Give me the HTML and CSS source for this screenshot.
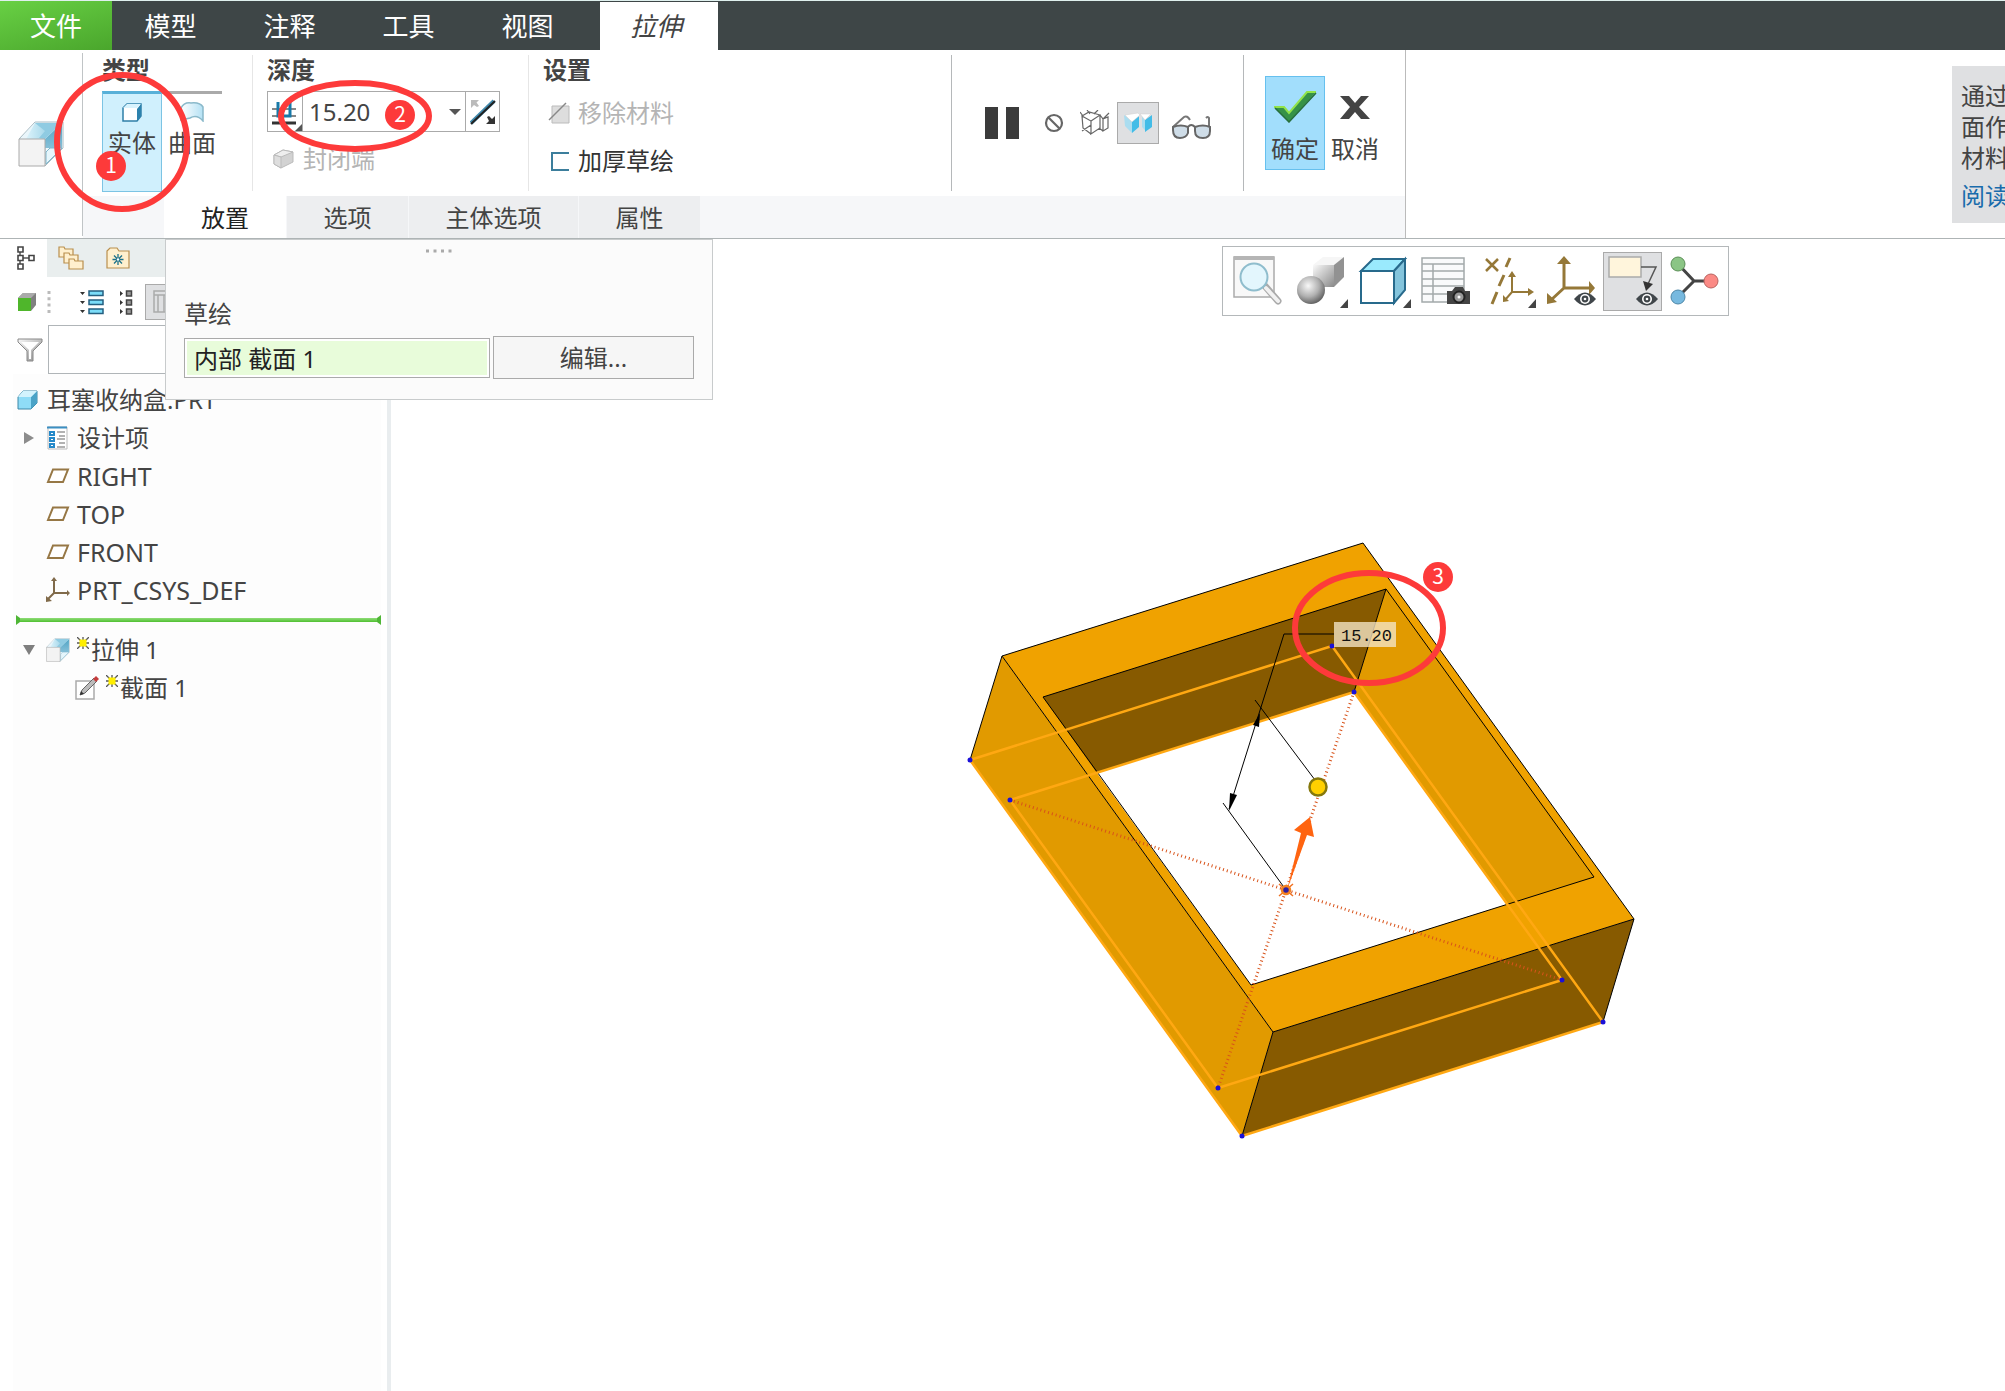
FILE: index.html
```html
<!DOCTYPE html>
<html lang="zh-CN">
<head>
<meta charset="utf-8">
<title>拉伸</title>
<link rel="stylesheet" href="styles.css">
</head>
<body>
<svg class="defs" aria-hidden="true">
  <defs>
    <linearGradient id="gBlue" x1="0" y1="0" x2="1" y2="0"><stop offset="0" stop-color="#dcf3fb"/><stop offset="1" stop-color="#8ecbe2"/></linearGradient>
    <linearGradient id="gSide" x1="0" y1="0" x2="0" y2="1"><stop offset="0" stop-color="#4fa3c4"/><stop offset="1" stop-color="#86c0d8"/></linearGradient>
    <linearGradient id="gLight" x1="0" y1="0" x2="1" y2="0"><stop offset="0" stop-color="#fff"/><stop offset="1" stop-color="#b4e1f4"/></linearGradient>
    <linearGradient id="gGrey" x1="0" y1="0" x2="1" y2="1"><stop offset="0" stop-color="#fafafa"/><stop offset="1" stop-color="#8a8a8a"/></linearGradient>
    <radialGradient id="gBall" cx=".4" cy=".35" r=".65"><stop offset="0" stop-color="#f8f8f8"/><stop offset=".6" stop-color="#b0b0b0"/><stop offset="1" stop-color="#666"/></radialGradient>
    <symbol id="extrude" viewBox="0 0 46 46">
      <path d="M1 18 17 1h28v26L27 45V18z" fill="#eef9fd" stroke="#a9bcc4"/>
      <path d="M2 18 17 2v16z" fill="#eaf6fb"/>
      <path d="M17 2h20L27 18H8z" fill="url(#gBlue)"/>
      <path d="M27 18 44 2v25H27z" fill="url(#gSide)"/><path d="M17 2h27L27 18l-6-1 6-7z" fill="#8fcbe2"/>
      <path d="M28 43V31l4-4h12z" fill="#e6f6fc" stroke="#7fb6cc"/>
      <path d="M1 18h26v27H1z" fill="#f3f3f3" stroke="#aaa"/>
    </symbol>
    <symbol id="eye" viewBox="0 0 22 14"><path d="M0 7Q11-6 22 7 11 20 0 7z" fill="#40464a"/><circle cx="11" cy="7" r="5" fill="#fff"/><circle cx="11" cy="7" r="3.4" fill="#40464a"/><circle cx="11" cy="7" r="1.3" fill="#fff"/></symbol>
    <symbol id="plane" viewBox="0 0 24 16"><path d="M7 1.500h15l-5 12.500H2z" fill="#fff" stroke="#967745" stroke-width="2"/></symbol>
    <symbol id="spark" viewBox="0 0 12 12"><path d="M0 0l12 12M12 0 0 12M6 0v12M0 6h12" stroke="#555" stroke-width="1.300"/><path d="M2.500 2.500h7v7h-7z" fill="#ffee00"/></symbol>
  </defs>
</svg>

<header>
  <nav class="menu">
    <button class="menu-tab file">文件</button>
    <button class="menu-tab">模型</button>
    <button class="menu-tab">注释</button>
    <button class="menu-tab">工具</button>
    <button class="menu-tab">视图</button>
    <button class="menu-tab current">拉伸</button>
  </nav>

  <div class="ribbon">
    <div class="feature"><svg width="46" height="46"><use href="#extrude"/></svg></div>
    <div class="dashboard">
      <div class="groups">
        <section class="group type">
          <h2>类型</h2>
          <div class="type-row">
            <button class="type-btn on"><svg width="22" height="20" viewBox="0 0 22 20"><path d="M2 6l4-4h14v12l-4 5H2z" fill="#fff" stroke="#2e7fa8" stroke-width="1.500"/><path d="M16 7l4-5v12l-4 5z" fill="#2c82ad"/><path d="M2 6l4-4h14l-4 4z" fill="#d9f3fd"/></svg>实体</button>
            <button class="type-btn"><svg width="24" height="20" viewBox="0 0 24 20"><path d="M1 6Q4 0 11 1q9-1 12 4v14q-6-7-13-3L1 18z" fill="url(#gLight)" stroke="#8ab9ca" stroke-width="1.500"/></svg>曲面</button>
          </div>
        </section>
        <section class="group depth">
          <h2>深度</h2>
          <div class="depth-box">
            <button class="cell" aria-label="深度选项"><svg width="34" height="39" viewBox="0 0 34 39"><path d="M4 17h24M4 24h24" stroke="#888" stroke-width="2"/><path d="M4 31h24" stroke="#333" stroke-width="3"/><path d="M10 10v14h12V10" fill="none" stroke="#1879a8" stroke-width="3"/><path d="M34 32v7h-7z" fill="#555"/></svg></button>
            <input class="depth-value" aria-label="深度" value="15.20">
            <button class="arrow" aria-label="展开"><svg width="12" height="8" viewBox="0 0 12 8"><path d="M0 1h12L6 7z" fill="#555"/></svg></button>
            <button class="cell flip" aria-label="反向"><svg width="26" height="26" viewBox="0 0 26 26"><path d="M1 24 24 2" stroke="#3f88ab" stroke-width="4"/><path d="M1 25 25 2" stroke="#222" stroke-width="2"/><path d="M1 1h8L6.500 3.500 9 7 7 8 4 6 1 9z" fill="#bbb"/><path d="M25 25h-9l3-3-2-4 2-1 3 3 3-3z" fill="#333"/></svg></button>
          </div>
          <button class="option off"><svg width="22" height="20" viewBox="0 0 22 20"><path d="M1 6l9-5 10 2v10L8 19l-7-4z" fill="#d2d2d2" stroke="#bbb"/><path d="M1 6l9-5 10 2L8 8z" fill="#eee" stroke="#bbb"/><path d="M1 6l7 2v11l-7-4z" fill="#dedede" stroke="#bbb"/></svg>封闭端</button>
        </section>
        <section class="group settings">
          <h2>设置</h2>
          <button class="option off"><svg width="22" height="22" viewBox="0 0 22 22"><path d="M4 4h17v17H4z" fill="#ddd" stroke="#bbb"/><path d="M1 18 18 1" stroke="#888" stroke-width="1.500"/></svg>移除材料</button>
          <button class="option"><svg width="22" height="22" viewBox="0 0 22 22"><path d="M21 3H4v17h17" fill="none" stroke="#3c7e9c" stroke-width="2"/></svg>加厚草绘</button>
        </section>
        <section class="group preview">
          <button aria-label="暂停"><svg width="36" height="34" viewBox="0 0 36 34"><path d="M1 1h13v32H1zM22 1h13v32H22z" fill="#3b3b3b"/></svg></button>
          <button class="stop" aria-label="无预览"><svg width="20" height="20" viewBox="0 0 20 20"><circle cx="10" cy="10" r="8" fill="none" stroke="#666" stroke-width="2.200"/><path d="M4.500 4.500l11 11" stroke="#666" stroke-width="2.200"/></svg></button>
          <button class="ghost" aria-label="分离预览"><svg width="30" height="26" viewBox="0 0 30 26"><path d="M2 6 11 11v13L3 18zM11 11l9-6v13l-9 6zM2 6l7-4 11 3M20 5l3 4v12l5-3V7l-5 2M23 9l6-6M0 2l3 4M7 0l3 4M14 4l4-4M11 15l-9 6M23 21l-4-3" fill="none" stroke="#666" stroke-width="1.200"/></svg></button>
          <button class="pressed" aria-label="连接预览"><svg width="28" height="22" viewBox="0 0 28 22"><path d="M0 3 8 9v12L1 14zM18 3l3 5v10l-3-3z" fill="#aaddf0"/><path d="M8 9l7-5v11l-7 6zM21 8l7-5v12l-7 5z" fill="#43bce7"/><path d="M1 3 14 1l2 2-8 7zM16 2h11l-6 6z" fill="#fff" stroke="#ccc" stroke-width=".5"/></svg></button>
          <button class="glasses" aria-label="校验"><svg width="42" height="26" viewBox="0 0 42 26"><path d="M2 13 13 3q3-2 6 3M38 13V4q-1-2-3 0" fill="none" stroke="#777" stroke-width="2"/><path d="M2 13q8-3 15 0v6q-2 5-8 5-7 0-7-8zM24 13q8-3 15 0v4q0 7-7 7-8 0-8-7z" fill="#cfdde8" stroke="#666" stroke-width="2"/><path d="M17 13q3-4 7 0" fill="none" stroke="#666" stroke-width="2"/></svg></button>
        </section>
        <section class="group finish">
          <button class="big ok"><svg width="44" height="32" viewBox="0 0 44 32"><path d="M1 16h10l5 6L34 1h9L16 31z" fill="#369247"/><path d="M1 16h10l5 6L34 1h9" fill="none" stroke="#92e34a" stroke-width="2"/><path d="M2 17 16 31 43 2" fill="none" stroke="#276f3c" stroke-width="1.500"/></svg>确定</button>
          <button class="big"><svg width="30" height="32" viewBox="0 0 30 32"><path d="M0 5h9l6 7 6-7h8L19 16l11 12h-9l-6-7-6 7H0l10-12z" fill="#444"/></svg>取消</button>
        </section>
      </div>
      <div class="panels">
        <button class="panel-tab active">放置</button>
        <button class="panel-tab">选项</button>
        <button class="panel-tab wide">主体选项</button>
        <button class="panel-tab">属性</button>
      </div>
    </div>
    <aside class="help"><p>通过<br>面作<br>材料</p><a href="#">阅读</a></aside>
  </div>
</header>

<main>
  <aside class="sidebar">
    <div class="nav-tabs">
      <button class="nav-tab sel" aria-label="模型树"><svg width="18" height="26" viewBox="0 0 18 26"><path d="M3 3v20M3 13h12" stroke="#555" stroke-width="1.500"/><path d="M1 2h5v5H1zM1 10.500h5v5H1zM1 19h5v5H1zM12 10.500h5v5h-5z" fill="#fff" stroke="#444" stroke-width="1.600"/></svg></button>
      <button class="nav-tab" aria-label="文件夹"><svg width="26" height="26" viewBox="0 0 26 26"><g fill="#fff0ce" stroke="#b98f4e" stroke-width="1.200"><path d="M1 2h5l1 2h8v8H1z"/><path d="M6 8h5l1 2h8v8H6z"/><path d="M11 14h5l1 2h8v8H11z"/></g></svg></button>
      <button class="nav-tab" aria-label="收藏夹"><svg width="24" height="24" viewBox="0 0 24 24"><path d="M1 5 4 2h7l2 3h10v17H1z" fill="#fff0ce" stroke="#b98f4e" stroke-width="1.200"/><path d="M12 8v11M6.500 13.500h11M8 9.500l8 8M16 9.500l-8 8" stroke="#1c7189" stroke-width="1.300"/><circle cx="12" cy="13.500" r="1.200" fill="#fff"/></svg></button>
    </div>
    <div class="tools">
      <svg width="20" height="20" viewBox="0 0 20 20"><path d="M1 6 6 1h13v12l-5 6V6z" fill="#808080"/><path d="M1 6 6 1h13l-5 5z" fill="#aaa"/><path d="M1 6h13v13H1z" fill="#4fb62b"/></svg>
      <svg class="grip" width="4" height="24" viewBox="0 0 4 24"><path d="M2 1v22" stroke="#bbb" stroke-width="3" stroke-dasharray="3 3.300"/></svg>
      <svg class="expand" width="24" height="26" viewBox="0 0 24 26"><g fill="#7bdcf8" stroke="#245f80" stroke-width="1.500"><path d="M9 2h14v4.500H9zM9 11h14v4.500H9zM9 20h14v4.500H9z"/></g><path d="M0 3h5L2.500 6zM0 12h5l-2.500 3zM0 21h5l-2.500 3z" fill="#333"/></svg>
      <svg class="collapse" width="14" height="26" viewBox="0 0 14 26"><g fill="#999" stroke="#444" stroke-width="1.500"><path d="M7.500 2h5v5h-5zM7.500 11h5v5h-5zM7.500 20h5v5h-5z"/></g><path d="M1 2v5l3-2.500zM1 11v5l3-2.500zM1 20v5l3-2.500z" fill="#333"/></svg>
      <button class="columns" aria-label="列"><svg width="24" height="24" viewBox="0 0 24 24"><path d="M1 1h22v21H1zM1 5h22M5 5v17M11 5v17" fill="none" stroke="#aaa" stroke-width="1.500"/></svg></button>
    </div>
    <div class="search">
      <svg width="26" height="24" viewBox="0 0 26 24"><path d="M1 1h24v3l-9 9v10h-6V13L1 4z" fill="url(#gGrey)" stroke="#888"/><path d="M4 4h18l-8 8v9h-2v-9z" fill="#fff"/></svg>
      <input aria-label="搜索">
    </div>
    <ul class="tree">
      <li><svg width="22" height="20" viewBox="0 0 22 20"><path d="M1 7 6 1h14v12l-6 6H1z" fill="#8fdcf7" stroke="#3d88a8"/><path d="M14 7l6-6v12l-6 6z" fill="#4ba3c7"/><path d="M1 7 6 1h14l-6 6z" fill="#d3f3fd"/></svg><span class="root-label">耳塞收纳盒.PRT</span></li>
      <li class="child"><svg class="tog" width="12" height="14" viewBox="0 0 12 14"><path d="M1 1v12l10-6z" fill="#8c8c8c"/></svg><svg width="24" height="24" viewBox="0 0 24 24"><path d="M2 1h19v22H2z" fill="#fff" stroke="#bbb"/><path d="M1 1.500h20" stroke="#3b8fc2" stroke-width="2"/><path d="M11 6h8M13 10h6M11 13h8M13 17h6M11 21h8" stroke="#999" stroke-width="1.500"/><path d="M4 6h4v3H4zM4 12h4v3H4zM4 18h4v3H4z" fill="#fff" stroke="#2589c9" stroke-width="2"/></svg><span>设计项</span></li>
      <li class="child latin"><i class="tog"></i><svg width="24" height="16"><use href="#plane"/></svg><span>RIGHT</span></li>
      <li class="child latin"><i class="tog"></i><svg width="24" height="16"><use href="#plane"/></svg><span>TOP</span></li>
      <li class="child latin"><i class="tog"></i><svg width="24" height="16"><use href="#plane"/></svg><span>FRONT</span></li>
      <li class="child latin"><i class="tog"></i><svg width="24" height="26" viewBox="0 0 24 26"><path d="M8 2v14h14M8 16l-6 6" fill="none" stroke="#806a4a" stroke-width="2"/><path d="M5 4l3-4 3 4zM21 13l3 3-3 3zM0 25v-6l6 5z" fill="#806a4a"/></svg><span>PRT_CSYS_DEF</span></li>
      <li class="insert"><svg width="4" height="10" viewBox="0 0 4 10"><path d="M0 0l4 3v4l-4 3z" fill="#4fb636"/></svg><i></i><svg width="4" height="10" viewBox="0 0 4 10"><path d="M4 0 0 3v4l4 3z" fill="#4fb636"/></svg></li>
      <li class="child"><svg class="tog" width="14" height="12" viewBox="0 0 14 12"><path d="M1 1h12L7 11z" fill="#7f7f7f"/></svg><svg width="24" height="24"><use href="#extrude"/></svg><svg class="spark" width="12" height="12"><use href="#spark"/></svg><span>拉伸 1</span></li>
      <li class="leaf"><svg width="24" height="24" viewBox="0 0 24 24"><path d="M1 5h18v18H1z" fill="#fff" stroke="#aaa" stroke-width="1.500"/><path d="M5 19l2-5L19 2l3 3L10 17z" fill="#bbb" stroke="#666"/><path d="M18 3l3-3 3 3-3 3z" fill="#c43c3c"/><path d="M5 19l1-4 3 3z" fill="#333"/></svg><svg class="spark" width="12" height="12"><use href="#spark"/></svg><span>截面 1</span></li>
    </ul>
  </aside>

  <section class="viewport">
    <div class="view-tools">
      <button aria-label="重新调整"><svg width="57" height="57" viewBox="0 0 57 57"><path d="M2 4h40v40H2z" fill="#f8f8f8" stroke="#aaa" stroke-width="1.500"/><path d="M2 5h40" stroke="#b5b5b5" stroke-width="4"/><path d="M33 33l13 15" stroke="#aaa" stroke-width="7" stroke-linecap="round"/><path d="M34 35l12 13" stroke="#f1f1f1" stroke-width="4" stroke-linecap="round"/><circle cx="22" cy="24" r="13.500" fill="#e3f6fd" stroke="#8fbdcd" stroke-width="2"/></svg></button>
      <button aria-label="着色"><svg width="57" height="57" viewBox="0 0 57 57"><path d="M19 12h21v22H19z" fill="url(#gGrey)"/><path d="M19 12 29 4h21l-9 8z" fill="#f6f6f6"/><path d="M40 12 50 4v20L40 34z" fill="#929292"/><circle cx="17" cy="37" r="14" fill="url(#gBall)"/><path d="M54 46v9h-8z" fill="#444"/></svg></button>
      <button aria-label="已保存方向"><svg width="57" height="57" viewBox="0 0 57 57"><g stroke="#286a8c" stroke-width="2"><path d="M5 18 17 6h32L38 18z" fill="#9aeafd"/><path d="M38 18 49 6v31L38 50z" fill="#84c4dc"/><path d="M5 18h33v32H5z" fill="#fff"/></g><path d="M55 46v9h-8z" fill="#444"/></svg></button>
      <button aria-label="视图管理器"><svg width="57" height="57" viewBox="0 0 57 57"><path d="M4 5h42v44H4zM4 11h42M4 18h42M4 26h42M4 33h42M4 41h42M15 11v38" fill="#f9fafb" stroke="#a3a9ab" stroke-width="1.500"/><path d="M29 38h5l3-4h8l2 4h5v13H29z" fill="#444"/><circle cx="41" cy="44" r="5.500" fill="#999" stroke="#222" stroke-width="2"/><circle cx="41" cy="44" r="1.500" fill="#fff"/></svg></button>
      <button aria-label="基准显示"><svg width="57" height="57" viewBox="0 0 57 57"><g fill="none" stroke="#957838" stroke-width="2.500"><path d="M6 6l12 12M18 6 6 18"/><path d="M30 5l-4 9M24 22l-5 11M17 39l-5 12" stroke-width="3"/><path d="M32 22v17h18M32 39l-7 8" stroke-width="2"/></g><path d="M28 24l4-6 4 6zM48 35l6 4-6 4zM23 49v-7l6 6z" fill="#957838"/><path d="M56 46v9h-8z" fill="#444"/></svg></button>
      <button aria-label="坐标系"><svg width="57" height="57" viewBox="0 0 57 57"><path d="M22 8v27h26M22 35 9 47" fill="none" stroke="#957838" stroke-width="3"/><path d="M15 11l7-8 7 8zM47 28l6 7-6 7zM5 51V40l10 9z" fill="#957838"/><use href="#eye" x="32" y="39" width="22" height="14"/></svg></button>
      <button class="pressed" aria-label="注释显示"><svg width="57" height="57" viewBox="0 0 57 57"><path d="M5 4h32v20H5z" fill="#fff5dc" stroke="#aaa" stroke-width="1.500"/><path d="M37 14h15l-8 17" fill="none" stroke="#555" stroke-width="1.500"/><path d="M39 28l10 3-7 7z" fill="#333"/><use href="#eye" x="32" y="39" width="22" height="14"/></svg></button>
      <button aria-label="旋转中心"><svg width="57" height="57" viewBox="0 0 57 57"><path d="M12 11l16 17L12 44M28 28h16" fill="none" stroke="#444" stroke-width="3"/><circle cx="12" cy="11" r="7" fill="#8bc585" stroke="#5b8e57"/><circle cx="12" cy="44" r="7" fill="#77b9df" stroke="#4d87a8"/><circle cx="45" cy="28" r="7" fill="#fb8a85" stroke="#b86460"/></svg></button>
    </div>
    <svg class="model" width="700" height="620" viewBox="950 530 700 620">
      <g stroke="none">
        <path d="M1002 656 1363 543l271 376-361 113z" fill="#f0a200"/>
        <path d="M1002 656l271 376-31 104L970 760z" fill="#e19a00"/>
        <path d="M1273 1032l361-113-31 103-361 114z" fill="#875a00"/>
        <path d="M1043 697l343-108-32 103-257 81z" fill="#875a00"/>
        <path d="M1386 589l208 288-86 27-154-212z" fill="#e19a00"/>
        <path d="M1097 773l257-81 154 212-257 81z" fill="#fff"/>
      </g>
      <g fill="none" stroke="#000" stroke-width="1">
        <path d="M1002 656 1363 543l271 376-361 113zM1002 656l-32 104M1273 1032l-31 104M1634 919l-31 103"/>
        <path d="M1043 697l343-108 208 288-343 108zM1386 589l-32 103"/>
      </g>
      <g fill="none" stroke="#ffa812" stroke-width="2.500">
        <path d="M970 760l362-114 271 376-361 114z"/><path d="M1010 800l344-108 208 288-344 108z"/>
      </g>
      <path d="M1010 800l552 180M1354 692l-136 396" fill="none" stroke="#d8531a" stroke-width="3" stroke-dasharray="1 3"/>
      <g fill="none" stroke="#000"><path d="M1334 634h-50l-55 175M1255 700l63 84M1223 803l63 87"/></g>
      <path d="M1260 713l-7 12 6 2zM1229 811l1-18 7 2z"/>
      <g fill="#1a10d8"><circle cx="970" cy="760" r="2.500"/><circle cx="1332" cy="646" r="2.500"/><circle cx="1603" cy="1022" r="2.500"/><circle cx="1242" cy="1136" r="2.500"/><circle cx="1010" cy="800" r="2.500"/><circle cx="1354" cy="692" r="2.500"/><circle cx="1562" cy="980" r="2.500"/><circle cx="1218" cy="1088" r="2.500"/></g>
      <circle cx="1318" cy="787" r="8.500" fill="#ffd000" stroke="#85780c" stroke-width="2.500"/>
      <path d="M1287 890l14-57-7-3 16-13 4 20-7-2z" fill="#ff6410"/>
      <path d="M1279 884l14 12M1293 884l-14 12" stroke="#f07020" stroke-width="1.500"/><circle cx="1286" cy="890" r="4" fill="#3020a0" stroke="#f58220" stroke-width="2.500"/>
      <path d="M1334 622h62v25h-62z" fill="#f3e6c8" fill-opacity=".78"/>
      <text class="dim" x="1341" y="641">15.20</text>
    </svg>
  </section>

  <section class="slide-panel">
    <svg class="dots" width="26" height="4" viewBox="0 0 26 4"><path d="M0 2h26" stroke="#aaa" stroke-width="3" stroke-dasharray="3 4.500"/></svg>
    <label for="sketch">草绘</label>
    <div class="sketch-row"><input id="sketch" value="内部 截面 1"><button>编辑...</button></div>
  </section>
</main>

<svg class="marks" width="1480" height="720" viewBox="0 0 1480 720">
  <g fill="none" stroke="#fd3a3a" stroke-width="6"><ellipse cx="122" cy="142" rx="65" ry="67"/><ellipse cx="355" cy="116" rx="74" ry="33"/><ellipse cx="1369" cy="628" rx="74" ry="55"/></g>
  <g fill="#fd3a3a"><circle cx="111" cy="166" r="15"/><circle cx="400" cy="115" r="15"/><circle cx="1438" cy="577" r="15"/></g>
  <g class="nums"><text x="111" y="173">1</text><text x="400" y="122">2</text><text x="1438" y="584">3</text></g>
</svg>
</body>
</html>
```
FILE: styles.css
```css
* { box-sizing: border-box; }
html, body { height: 100%; }
body {
  margin: 0;
  display: flex;
  flex-direction: column;
  position: relative;
  overflow: hidden;
  background: #fff;
  color: #444;
  font: 24px/30px "Noto Sans", "Noto Sans CJK SC", sans-serif;
}
button, input { font: inherit; color: inherit; margin: 0; padding: 0; border: 0; background: none; border-radius: 0; }
svg { display: block; flex: none; }
h2, p, ul { margin: 0; padding: 0; }
.defs { position: absolute; width: 0; height: 0; }

/* menu bar */
.menu { display: flex; height: 50px; background: #3e4647; border-top: 1px solid #dff0ee; }
.menu-tab { width: 119px; color: #fff; font-size: 26px; padding-right: 2px; }
.menu-tab.file { width: 112px; padding-right: 0; background: linear-gradient(165deg, #68d044, #4aa62c); }
.menu-tab.current { width: 118px; margin: 1px 0 0 12px; padding-right: 6px; background: #fff; color: #444; font-style: italic; }

/* ribbon */
.ribbon { display: flex; height: 189px; border-bottom: 1px solid #aeb4b5; overflow: hidden; }
.feature { width: 83px; margin: 3px 0 2px; padding: 68px 0 0 18px; border-right: 1px solid #c0c4c6; }
.dashboard { width: 1323px; display: flex; flex-direction: column; border-right: 1px solid #bbb; }
.groups { display: flex; height: 146px; }
.group { margin: 5px 0; border-right: 1px solid #e6e6e6; }
.group h2 { font-size: 24px; line-height: 30px; font-weight: 700; margin-bottom: 6px; }
.type { width: 170px; padding-left: 19px; }
.type-row { display: flex; }
.type-btn { width: 60px; height: 101px; border-top: 3px solid #aaa; display: flex; flex-direction: column; align-items: center; gap: 6px; padding-top: 8px; }
.type-btn.on { border: 1px solid #7cc4e4; border-top: 3px solid #58b0d8; background: #d0f0fd; }
.depth { width: 276px; padding-left: 14px; }
.depth-box { width: 233px; height: 41px; display: flex; align-items: stretch; border: 1px solid #aaa; }
.cell { width: 34px; flex: none; }
.depth-value { width: 142px; padding-left: 6px; border-left: 1px solid #aaa; }
.arrow { flex: 1; display: grid; place-items: center; }
.flip { border-left: 1px solid #aaa; display: grid; place-items: center; }
.option { display: flex; align-items: center; gap: 8px; height: 48px; line-height: 30px; color: #333; }
.option.off { color: #b4b4b4; }
.depth .option { margin: 3px 0 0 6px; }
.settings { width: 423px; padding-left: 14px; border-color: #b5b8ba; }
.settings h2 { margin-bottom: 4px; }
.settings .option { margin-left: 5px; }
.preview { width: 292px; padding: 0 30px 0 32px; display: flex; align-items: center; border-color: #b5b8ba; }
.preview .stop { margin-left: 24px; }
.preview .ghost { margin-left: 16px; }
.preview .pressed { width: 42px; height: 42px; margin-left: 7px; display: grid; place-items: center; }
.preview .glasses { margin: 8px 0 0 12px; }
.pressed { background: #dfe0e2; border: 1px solid #aaa; }
.finish { display: flex; border: 0; padding: 21px 0 0 21px; }
.big { width: 60px; height: 94px; display: flex; flex-direction: column; align-items: center; gap: 11px; padding-top: 14px; border: 1px solid transparent; }
.big.ok { background: #a2defc; border-color: #66c0ee; }
.panels { display: flex; height: 42px; gap: 1px; padding-left: 81px; background: #f6f7f9; }
.panel-tab { width: 121px; background: #edeef0; padding-top: 1px; }
.panel-tab.active { width: 122px; background: #fff; color: #222; }
.panel-tab.wide { width: 169px; }
.help { width: 53px; height: 157px; margin: 16px 0 0 auto; padding: 14px 0 0 9px; background: #dfe0e2; overflow: hidden; white-space: nowrap; line-height: 31px; }
.help a { display: block; margin-top: 7px; color: #1a6cac; text-decoration: none; }

/* model tree */
main { flex: 1; display: flex; position: relative; min-height: 0; }
.sidebar { width: 391px; flex: none; border-right: 4px solid #e9edef; background: #fff; display: flex; flex-direction: column; }
.nav-tabs { display: flex; height: 38px; background: #e9eeee; }
.nav-tab { width: 47px; display: grid; place-items: center; }
.nav-tab.sel { padding-left: 4px; background: #fff; }
.tools { display: flex; align-items: center; height: 48px; padding: 2px 0 0 17px; }
.grip { margin-left: 10px; }
.expand { margin-left: 29px; }
.collapse { margin-left: 15px; }
.columns { width: 60px; height: 36px; margin-left: 12px; padding-left: 7px; background: #dfe0e2; border: 1px solid #aaa; }
.search { display: flex; align-items: center; gap: 5px; padding-left: 17px; }
.search input { width: 330px; height: 49px; border: 1px solid #b0b5b8; background: #fff; }
.tree { flex: 1; list-style: none; margin: 0 6px 0 13px; padding-top: 7px; background: #fdfdfd; }
.tree li { display: flex; align-items: center; height: 38px; padding-left: 4px; }
.tree .latin { font-size: 25px; }
.root-label { margin-left: 8px; }
.tree .child { padding-left: 9px; }
.tog { width: 14px; margin-right: 10px; }
.child span, .leaf span { margin-left: 7px; }
.tree .leaf { padding-left: 62px; }
.spark { margin: -14px 0 0 7px; }
.tree .spark + span { margin-left: 2px; }
.tree .insert { height: 10px; margin: 6px 0 6px 3px; padding: 0; }
.insert i { flex: 1; height: 4px; background: linear-gradient(#8fdc78, #4fc030); }

/* graphics area */
.viewport { flex: 1; position: relative; display: flex; justify-content: flex-end; align-items: flex-start; min-width: 0; }
.view-tools { display: flex; gap: 3px; margin: 7px 276px 0 0; padding: 5px 4px 4px 8px; border: 1px solid #b4b8ba; background: #fff; }
.view-tools button { width: 59px; height: 59px; border: 1px solid transparent; }
.view-tools .pressed { border-color: #aaa; }
.model { position: absolute; left: 559px; top: 291px; }
.dim { font: 17px "Liberation Mono", monospace; fill: #111; }

/* placement panel */
.slide-panel { position: absolute; left: 165px; top: 0; width: 548px; height: 161px; padding: 9px 18px 0; background: #fbfbfb; border: 1px solid #c8cbcc; display: flex; flex-direction: column; }
.dots { margin: 0 auto 46px; }
.sketch-row { display: flex; align-items: center; gap: 3px; margin-top: 7px; }
.sketch-row input { width: 306px; height: 40px; padding-left: 9px; border: 1px solid #aaa; box-shadow: inset 0 0 0 2px #fff; background: #e8fcda; color: #222; }
.sketch-row button { width: 202px; height: 43px; border: 1px solid #aaa; background: #f6f6f6; }

/* numbered callouts */
.marks { position: absolute; left: 0; top: 0; pointer-events: none; }
.nums { fill: #fff; font: 21px "Noto Sans CJK SC", sans-serif; text-anchor: middle; }
```
